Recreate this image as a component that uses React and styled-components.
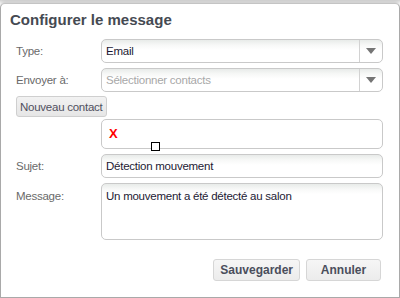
import React from "react";
import styled, { createGlobalStyle } from "styled-components";

const Global = createGlobalStyle`
  html, body { margin: 0; padding: 0; background: #fff; }
  body { font-family: "Liberation Sans", Arial, sans-serif; overflow: hidden; }
  * { box-sizing: border-box; }
`;

const textFont = `
  font-family: "Liberation Sans", Arial, sans-serif;
  font-size: 11.5px;
  letter-spacing: -0.25px;
`;

const Page = styled.div`
  width: 400px;
  height: 298px;
  padding-top: 3px;
  background: linear-gradient(#d0d0d0, #f4f4f4 3px, #fff 4px);
`;

const Dialog = styled.div`
  width: 400px;
  height: 295px;
  background: #fff;
  border: 1px solid #a9a9a9;
  border-top-color: #c4c4c4;
  border-radius: 5px 5px 0 0;
  box-shadow: 0 -1px 3px rgba(0, 0, 0, 0.18);
  display: flex;
  flex-direction: column;
`;

const Title = styled.h1`
  margin: 7px 0 0 9px;
  font-size: 15px;
  line-height: 18px;
  font-weight: bold;
  color: #454a52;
`;

const Form = styled.div`
  display: flex;
  flex-direction: column;
  padding: 10px 0 0 15px;
`;

const Row = styled.div`
  display: grid;
  grid-template-columns: 85px 282px;
  align-items: ${(p) => (p.$top ? "start" : "center")};
  margin-top: ${(p) => p.$gap || 0}px;
`;

const Label = styled.label`
  ${textFont}
  color: #6a6a6a;
  padding-top: ${(p) => (p.$top ? "7px" : "0")};
`;

const fieldBg = `linear-gradient(#e8ebe9 0px, #f7f8f7 5px, #fff 10px)`;

const Select = styled.div`
  height: 24px;
  display: flex;
  align-items: stretch;
  border: 1px solid #c9c9c9;
  border-radius: 5px;
  background: ${fieldBg};
  ${textFont}
`;

const SelectValue = styled.div`
  flex: 1;
  display: flex;
  align-items: center;
  padding-left: 4px;
  color: ${(p) => (p.$placeholder ? "#a8a8a8" : "#1c1a33")};
`;

const ArrowBox = styled.div`
  width: 23px;
  border-left: 1px solid #d2d2d2;
  display: flex;
  align-items: center;
  justify-content: center;
`;

const Arrow = styled.span`
  width: 0;
  height: 0;
  border-left: 5px solid transparent;
  border-right: 5px solid transparent;
  border-top: 6px solid #757575;
`;

const SmallButton = styled.button`
  align-self: flex-start;
  margin-top: 4px;
  height: 21px;
  padding: 0 3px;
  ${textFont}
  color: #505060;
  background: linear-gradient(#f2f2f2, #e6e6e6);
  border: 1px solid #cfcfcf;
  border-radius: 3px;
`;

const ContactsBox = styled.div`
  position: relative;
  height: 30px;
  border: 1px solid #c9c9c9;
  border-radius: 5px;
  background: #fff;
`;

const RemoveX = styled.span`
  position: absolute;
  left: 7px;
  top: 6px;
  font-size: 13px;
  line-height: 15px;
  font-weight: bold;
  color: #f00;
`;

const Handle = styled.span`
  position: absolute;
  left: 49px;
  top: 22px;
  width: 9px;
  height: 9px;
  border: 1px solid #000;
  background: #fff;
`;

const Input = styled.div`
  height: 24px;
  display: flex;
  align-items: center;
  padding-left: 4px;
  border: 1px solid #c9c9c9;
  border-radius: 5px;
  background: ${fieldBg};
  ${textFont}
  color: #1c1a33;
`;

const TextArea = styled.div`
  height: 57px;
  padding: 5px 4px;
  border: 1px solid #c9c9c9;
  border-radius: 5px;
  background: ${fieldBg};
  ${textFont}
  line-height: 14px;
  color: #1c1a33;
`;

const Actions = styled.div`
  display: flex;
  justify-content: flex-end;
  gap: 6px;
  margin-top: 19px;
  padding-right: 18px;
`;

const ActionButton = styled.button`
  height: 22px;
  min-width: 75px;
  padding: 0 6px;
  font-family: "Liberation Sans", Arial, sans-serif;
  font-size: 12px;
  font-weight: bold;
  color: #4a4e5c;
  background: linear-gradient(#f6f6f6, #ececec);
  border: 1px solid #d6d6d6;
  border-radius: 3px;
`;

export default function App() {
  return (
    <>
      <Global />
      <Page>
        <Dialog>
          <Title>Configurer le message</Title>
          <Form>
            <Row>
              <Label>Type:</Label>
              <Select>
                <SelectValue>Email</SelectValue>
                <ArrowBox><Arrow /></ArrowBox>
              </Select>
            </Row>
            <Row $gap={5}>
              <Label>Envoyer à:</Label>
              <Select>
                <SelectValue $placeholder>Sélectionner contacts</SelectValue>
                <ArrowBox><Arrow /></ArrowBox>
              </Select>
            </Row>
            <SmallButton>Nouveau contact</SmallButton>
            <Row $gap={2}>
              <span />
              <ContactsBox>
                <RemoveX>X</RemoveX>
                <Handle />
              </ContactsBox>
            </Row>
            <Row $gap={5}>
              <Label>Sujet:</Label>
              <Input>Détection mouvement</Input>
            </Row>
            <Row $gap={5} $top>
              <Label $top>Message:</Label>
              <TextArea>Un mouvement a été détecté au salon</TextArea>
            </Row>
          </Form>
          <Actions>
            <ActionButton>Sauvegarder</ActionButton>
            <ActionButton>Annuler</ActionButton>
          </Actions>
        </Dialog>
      </Page>
    </>
  );
}
